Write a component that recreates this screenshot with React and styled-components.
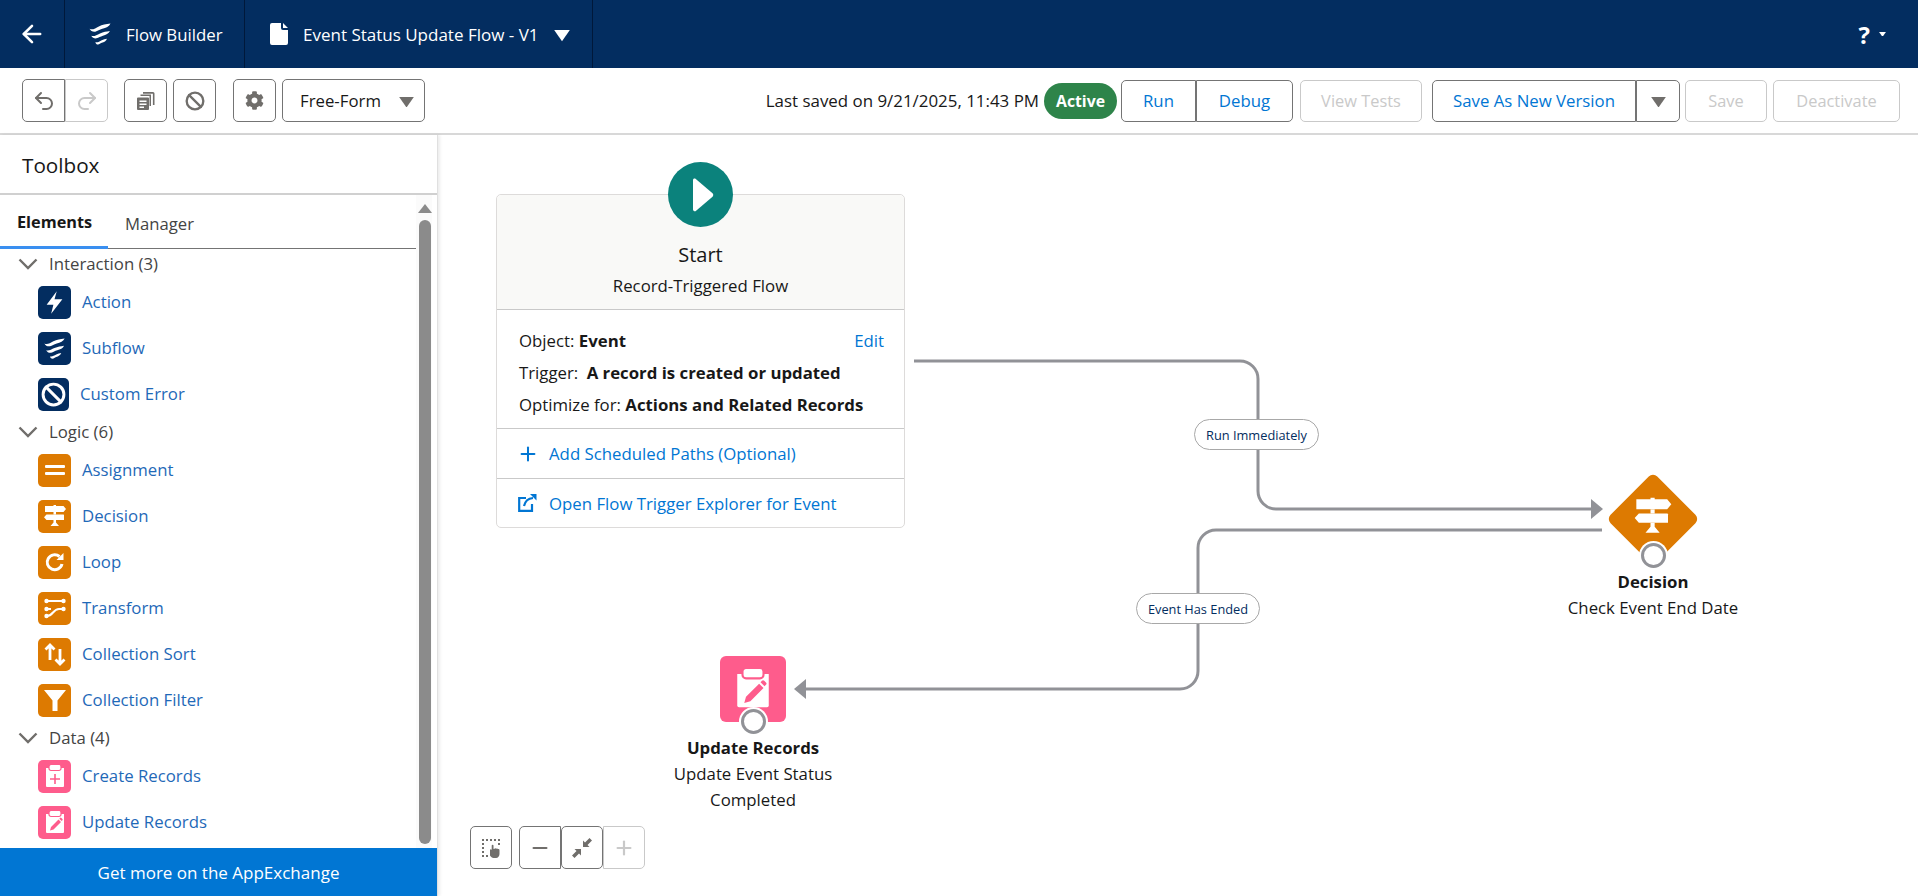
import React from "react";
import styled, { createGlobalStyle } from "styled-components";
import { ArrowLeft, Undo2, Redo2, Ban, Plus, Minus } from "lucide-react";
import { FaCog } from "react-icons/fa";

const GlobalStyle = createGlobalStyle`
  html, body { margin: 0; padding: 0; background: #fff; }
  body { font-family: "Open Sans", "Noto Sans", sans-serif; font-size: 16.8px; color: #181818; overflow: hidden; }
  * { box-sizing: border-box; }
`;

const NAVY = "#032d60";
const ORANGE = "#dd7a01";
const PINK = "#fe5c8c";
const LINK = "#0176d3";
const TOOL_LINK = "#1f69b8";
const LINE = "#919297";

function FlowWaves({ size = 24, color = "#fff" }) {
  return (
    <svg width={size} height={size} viewBox="0 0 24 24" fill={color}>
      <path d="M3 7.500c2.500 1.500 5-.5 8-2 3-1.400 6-2 10-2.500-1 2.500-4 3.800-7 4.500-2.500.6-4 2-6 2.500-2 .4-4-.5-5-2.500z" />
      <path d="M4.500 13.500c2.500 1 4.500-.8 7.500-2 3-1.200 5.500-1.500 8.500-2-1 2.300-3.500 3.300-6 4-2.200.6-3.500 1.800-5.500 2.200-1.800.3-3.500-.5-4.500-2.200z" />
      <path d="M8 19c2 .6 3.500-.8 5.500-1.700 1.500-.7 3-1 4.500-1.300-.7 2-2.500 3-4.500 3.500-1.300.4-2 1.500-3.200 1.500-1 0-2-.8-2.300-2z" />
    </svg>
  );
}

function Bolt() {
  return <svg width="27" height="27" viewBox="0 0 24 24" fill="#fff"><path d="M14 2 5 14h6l-2 8 10-13h-7z" /></svg>;
}
function Bars() {
  return <svg width="24" height="24" viewBox="0 0 24 24" fill="#fff"><rect x="2" y="7" width="20" height="3" rx="1" /><rect x="2" y="14" width="20" height="3" rx="1" /></svg>;
}
function SignPost({ size = 24 }) {
  return (
    <svg width={size} height={size} viewBox="0 0 24 24" fill="#fff">
      <path d="M2 2h8.500V1H13v1h7.500L23 5l-2.500 3H2z" />
      <path d="M3.500 10.500H20.500a.5.500 0 0 1 .5.500v5H3.500L1 13.200z" />
      <path d="M10.500 16H13v2.500l3 3.500H7.500l3-3.500z" />
      <path d="M10.500 8H13v2.500h-2.500z" />
    </svg>
  );
}
function LoopArrow() {
  return (
    <svg width="24" height="24" viewBox="0 0 24 24" fill="none" stroke="#fff" strokeWidth="3">
      <path d="M19 14a7.500 7.500 0 1 1-2.500-7.500" />
      <path d="M20.500 3v7h-7z" fill="#fff" stroke="none" />
    </svg>
  );
}
function TransformGlyph() {
  return (
    <svg width="24" height="24" viewBox="0 0 24 24" fill="none" stroke="#fff" strokeWidth="2">
      <path d="M4 5h16M4 13h4M4 20c6 0 6-7 12-7h4" />
      <g fill="#fff" stroke="none"><circle cx="3.500" cy="5" r="2.200" /><circle cx="20.500" cy="5" r="2.200" /><circle cx="3.500" cy="13" r="2.200" /><circle cx="20.500" cy="13" r="2.200" /><circle cx="3.500" cy="20" r="2.200" /></g>
    </svg>
  );
}
function SortArrows() {
  return (
    <svg width="24" height="24" viewBox="0 0 24 24" fill="none" stroke="#fff" strokeWidth="2.800">
      <path d="M7 18V3M2.500 7.500 7 3l4.500 4.500" />
      <path d="M17 7v15M12.500 17.500 17 22l4.500-4.500" />
    </svg>
  );
}
function Funnel() {
  return <svg width="24" height="24" viewBox="0 0 24 24" fill="#fff"><path d="M1 2h22l-8.500 10.500V23h-5V12.500z" /></svg>;
}
function Clipboard({ size = 24, color = PINK, mark = "edit" }) {
  return (
    <svg width={size} height={size} viewBox="0 0 24 24">
      <path d="M3 4h18v18a1 1 0 0 1-1 1H4a1 1 0 0 1-1-1z" fill="#fff" />
      <rect x="6" y="0.500" width="12" height="6" rx="2" fill="#fff" stroke={color} strokeWidth="1.200" />
      {mark === "plus" ? (
        <path d="M12 10v10M7 15h10" stroke={color} strokeWidth="1.600" />
      ) : (
        <path d="M7 20.500l1-3.500 7.500-7.500 2.500 2.500L10.500 19.500zM16.300 8.700l.8-.8a.9.900 0 0 1 1.300 0l1 1a.9.900 0 0 1 0 1.300l-.8.800z" fill={color} />
      )}
    </svg>
  );
}
function Chevron() {
  return <svg width="20" height="12" viewBox="0 0 20 12" fill="none" stroke="#706e6b" strokeWidth="2.400"><path d="M1.500 1.500 10 10l8.500-8.500" /></svg>;
}
function OpenOut() {
  return (
    <svg width="20" height="20" viewBox="0 0 20 20" fill="none" stroke={LINK} strokeWidth="2.200">
      <path d="M9 5H2.200v12.800H15V11" />
      <path d="M7 13c1-4.500 4-7.500 9-8" />
      <path d="M13 1h6.500v6.500z" fill={LINK} stroke="none" />
    </svg>
  );
}
function CopyDocs() {
  return (
    <svg width="20" height="20" viewBox="0 0 20 20" fill="#706e6b">
      <path d="M7 1h10a1.500 1.500 0 0 1 1.500 1.500V14h-1.600V2.700H7z" />
      <path d="M4.500 3.500H15V15h-1.500V5H4.500z" />
      <path d="M2 6.500h10a1 1 0 0 1 1 1V18a1 1 0 0 1-1 1H2a1 1 0 0 1-1-1V7.500a1 1 0 0 1 1-1z" />
      <path d="M3.500 9.500h7v1.500h-7zM3.500 12.500h7V14h-7zM3.500 15.500h4.500V17H3.500z" fill="#fff" />
    </svg>
  );
}
function Marquee() {
  return (
    <svg width="24" height="24" viewBox="0 0 24 24" fill="#706e6b">
      <path d="M3 3h2v2H3zM7 3h2v2H7zM11 3h2v2h-2zM15 3h2v2h-2zM19 3h2v2h-2zM3 7h2v2H3zM19 7h2v2h-2zM3 11h2v2H3zM3 15h2v2H3zM3 19h2v2H3zM7 19h2v2H7z" />
      <path d="M11 14c0-1 1.500-1 1.700 0V9.500c0-1 1.800-1 1.800 0V13l1-.2c.6-1 1.600-.6 1.800 0 .7-.6 1.600-.2 1.700.4.700-.3 1.500.2 1.500 1V18c0 2-1.500 4-3.500 4h-2.500c-1.500 0-2.500-1-3.500-2.500z" />
    </svg>
  );
}
function ShrinkArrows() {
  return (
    <svg width="22" height="22" viewBox="0 0 22 22" fill="#706e6b">
      <path d="M12 10V3.500l2 2L18.500 1 21 3.500 16.500 8l2 2z" />
      <path d="M10 12v6.500l-2-2L3.500 21 1 18.500 5.500 14l-2-2z" />
    </svg>
  );
}
function Caret({ size = 14, color = "#706e6b", drop = 0 }) {
  return <CaretSvg $drop={drop} width={size} height={size * 0.7} viewBox="0 0 14 10" fill={color}><path d="M0 0h14L7 10z" /></CaretSvg>;
}

const groups = [
  { name: "Interaction (3)", items: [
    { label: "Action", color: NAVY, icon: <Bolt /> },
    { label: "Subflow", color: NAVY, icon: <FlowWaves size={27} /> },
    { label: "Custom Error", color: NAVY, icon: <Ban size={25} color="#fff" strokeWidth={2.8} />, narrow: true },
  ] },
  { name: "Logic (6)", items: [
    { label: "Assignment", color: ORANGE, icon: <Bars /> },
    { label: "Decision", color: ORANGE, icon: <SignPost /> },
    { label: "Loop", color: ORANGE, icon: <LoopArrow /> },
    { label: "Transform", color: ORANGE, icon: <TransformGlyph /> },
    { label: "Collection Sort", color: ORANGE, icon: <SortArrows /> },
    { label: "Collection Filter", color: ORANGE, icon: <Funnel /> },
  ] },
  { name: "Data (4)", items: [
    { label: "Create Records", color: PINK, icon: <Clipboard size={24} mark="plus" /> },
    { label: "Update Records", color: PINK, icon: <Clipboard size={24} /> },
  ] },
];

export default function App() {
  return (
    <Page>
      <GlobalStyle />
      <TopBar>
        <BackCell><ArrowLeft size={28} color="#fff" strokeWidth={2.2} /></BackCell>
        <BuilderCell><FlowWaves size={28} /><span>Flow Builder</span></BuilderCell>
        <FlowCell>
          <svg width="18" height="22" viewBox="0 0 18 22" fill="#fff"><path d="M2 0h9v5a2 2 0 0 0 2 2h5v13a2 2 0 0 1-2 2H2a2 2 0 0 1-2-2V2a2 2 0 0 1 2-2zM13 0l5 5h-5z" /></svg>
          <span>Event Status Update Flow - V1</span>
          <Caret size={16} color="#fff" drop={4} />
        </FlowCell>
        <HelpCell><HelpMark>?</HelpMark><Caret size={7} color="#fff" /></HelpCell>
      </TopBar>

      <ToolBar>
        <ToolGroup>
          <Joined>
            <IconBtn><Undo2 size={24} color="#706e6b" /></IconBtn>
            <IconBtn $off><Redo2 size={24} color="#c9c9c9" /></IconBtn>
          </Joined>
          <IconBtn $gap={16}><CopyDocs /></IconBtn>
          <IconBtn $gap={6}><Ban size={20} color="#706e6b" strokeWidth={2.8} /></IconBtn>
          <IconBtn $gap={17}><FaCog size={19} color="#706e6b" /></IconBtn>
          <ModeSelect><span>Free-Form</span><Caret size={15} drop={3} /></ModeSelect>
        </ToolGroup>
        <ToolGroup>
          <SavedText>Last saved on 9/21/2025, 11:43 PM</SavedText>
          <ActiveBadge>Active</ActiveBadge>
          <Joined>
            <TextBtn $w={75}>Run</TextBtn>
            <TextBtn $w={97}>Debug</TextBtn>
          </Joined>
          <TextBtn $w={122} $off $gap={7}>View Tests</TextBtn>
          <Joined $gap={10}>
            <TextBtn $w={204}>Save As New Version</TextBtn>
            <TextBtn $w={44}><Caret size={15} drop={3} /></TextBtn>
          </Joined>
          <TextBtn $w={82} $off $gap={5}>Save</TextBtn>
          <TextBtn $w={127} $off $gap={6}>Deactivate</TextBtn>
        </ToolGroup>
      </ToolBar>

      <Main>
        <Sidebar>
          <SideTitle>Toolbox</SideTitle>
          <SideBody>
            <SideList>
              <Tabs>
                <Tab $active>Elements</Tab>
                <Tab>Manager</Tab>
              </Tabs>
              {groups.map((g) => (
                <div key={g.name}>
                  <GroupHead><Chevron /><RowLabel>{g.name}</RowLabel></GroupHead>
                  {g.items.map((it) => (
                    <ToolItem key={it.label}>
                      <ToolIcon $color={it.color} $narrow={it.narrow}>{it.icon}</ToolIcon>
                      <RowLabel>{it.label}</RowLabel>
                    </ToolItem>
                  ))}
                </div>
              ))}
            </SideList>
            <ScrollTrack>
              <ScrollArrow />
              <ScrollThumb />
            </ScrollTrack>
          </SideBody>
          <Exchange>Get more on the AppExchange</Exchange>
        </Sidebar>

        <Canvas>
          <Wires width="1481" height="761" viewBox="438 135 1481 761" fill="none">
            <path d="M914 361H1240a18 18 0 0 1 18 18V491a18 18 0 0 0 18 18H1592" stroke={LINE} strokeWidth="3" />
            <path d="M1591 499l12 10-12 10z" fill={LINE} />
            <path d="M1602 530H1216a18 18 0 0 0-18 18V671a18 18 0 0 1-18 18H806" stroke={LINE} strokeWidth="3" />
            <path d="M806 679l-12 10 12 10z" fill={LINE} />
          </Wires>

          <StartCard>
            <StartCircle>
              <svg width="22" height="34" viewBox="0 0 22 34" fill="#fff"><path d="M1 2c0-1.500 1.500-2 2.500-1.200l17 14.500c1 .9 1 2.500 0 3.400l-17 14.500C2.500 33.500 1 33 1 31.500z" /></svg>
            </StartCircle>
            <StartHead>
              <StartTitle>Start</StartTitle>
              <div>Record-Triggered Flow</div>
            </StartHead>
            <StartInfo>
              <InfoRow><span>Object: <b>Event</b></span><EditLink>Edit</EditLink></InfoRow>
              <InfoRow><span>Trigger: <TriggerValue>A record is created or updated</TriggerValue></span></InfoRow>
              <InfoRow><span>Optimize for: <b>Actions and Related Records</b></span></InfoRow>
            </StartInfo>
            <CardLink>
              <Plus size={22} color={LINK} strokeWidth={2.2} />
              <span>Add Scheduled Paths (Optional)</span>
            </CardLink>
            <CardLink>
              <OpenOut />
              <LinkText>Open Flow Trigger Explorer for Event</LinkText>
            </CardLink>
          </StartCard>

          <EdgeLabel $x={756} $y={284} $w={125}>Run Immediately</EdgeLabel>
          <EdgeLabel $x={698} $y={458} $w={124}>Event Has Ended</EdgeLabel>

          <FlowNode $cx={1215} $top={340}>
            <Diamond><DiamondGlyph><SignPost size={40} /></DiamondGlyph></Diamond>
            <NodeDot $overlap={20} />
            <NodeTitle>Decision</NodeTitle>
            <div>Check Event End Date</div>
          </FlowNode>

          <FlowNode $cx={315} $top={521}>
            <PinkTile><Clipboard size={42} /></PinkTile>
            <NodeDot $overlap={13} />
            <NodeTitle>Update Records</NodeTitle>
            <div>Update Event Status</div>
            <div>Completed</div>
          </FlowNode>

          <ZoomBar>
            <ZoomBtn><Marquee /></ZoomBtn>
            <ZoomGroup>
              <ZoomBtn><Minus size={22} color="#706e6b" strokeWidth={2.4} /></ZoomBtn>
              <ZoomBtn><ShrinkArrows /></ZoomBtn>
              <ZoomBtn $off><Plus size={22} color="#c9c9c9" strokeWidth={2.4} /></ZoomBtn>
            </ZoomGroup>
          </ZoomBar>
        </Canvas>
      </Main>
    </Page>
  );
}

const CaretSvg = styled.svg`
  margin-top: ${(p) => p.$drop}px;
`;

const Page = styled.div`
  width: 1918px;
  height: 896px;
  display: flex;
  flex-direction: column;
  overflow: hidden;
`;

const TopBar = styled.header`
  height: 68px;
  flex: none;
  background: ${NAVY};
  color: #fff;
  display: flex;
  align-items: stretch;
`;
const BackCell = styled.div`
  width: 65px;
  display: flex;
  align-items: center;
  justify-content: center;
  border-right: 1px solid #00183a;
`;
const BuilderCell = styled.div`
  width: 180px;
  display: flex;
  align-items: center;
  gap: 12px;
  padding-left: 21px;
  border-right: 1px solid #00183a;
`;
const FlowCell = styled.div`
  width: 348px;
  display: flex;
  align-items: center;
  gap: 15px;
  padding-left: 25px;
  border-right: 1px solid #00183a;
  font-size: 17px;
`;
const HelpCell = styled.div`
  margin-left: auto;
  padding-right: 32px;
  display: flex;
  align-items: center;
  gap: 9px;
`;
const HelpMark = styled.span`
  font-size: 24px;
  font-weight: 700;
`;

const ToolBar = styled.div`
  height: 67px;
  flex: none;
  display: flex;
  align-items: center;
  justify-content: space-between;
  padding: 0 18px 0 22px;
  border-bottom: 2px solid #d8d8d8;
`;
const ToolGroup = styled.div`
  display: flex;
  align-items: center;
`;
const Joined = styled.div`
  display: flex;
  margin-left: ${(p) => p.$gap || 0}px;
  & > * { border-radius: 0; margin: 0; }
  & > * + * { border-left: none; }
  & > *:first-child { border-radius: 5px 0 0 5px; }
  & > *:last-child { border-radius: 0 5px 5px 0; }
`;
const IconBtn = styled.button`
  width: 43px;
  height: 43px;
  padding: 0;
  margin-left: ${(p) => p.$gap || 0}px;
  display: flex;
  align-items: center;
  justify-content: center;
  background: #fff;
  border: 1px solid ${(p) => (p.$off ? "#c9c9c9" : "#747474")};
  border-radius: 5px;
`;
const ModeSelect = styled.button`
  width: 143px;
  height: 43px;
  margin-left: 6px;
  padding: 0 10px 0 17px;
  display: flex;
  align-items: center;
  justify-content: space-between;
  background: #fff;
  border: 1px solid #747474;
  border-radius: 5px;
  font: inherit;
  color: #181818;
`;
const SavedText = styled.span`
  font-size: 16.900px;
  margin-right: 5px;
`;
const ActiveBadge = styled.span`
  width: 73px;
  height: 36px;
  border-radius: 18px;
  background: #2e844a;
  color: #fff;
  font-weight: 700;
  font-size: 15.800px;
  display: flex;
  align-items: center;
  justify-content: center;
  margin-right: 4px;
`;
const TextBtn = styled.button`
  width: ${(p) => p.$w}px;
  height: 42px;
  margin-left: ${(p) => p.$gap || 0}px;
  padding: 0;
  display: flex;
  align-items: center;
  justify-content: center;
  background: #fff;
  border: 1px solid ${(p) => (p.$off ? "#c9c9c9" : "#747474")};
  border-radius: 5px;
  font: inherit;
  font-size: ${(p) => (p.$off ? 16.4 : 16.8)}px;
  color: ${(p) => (p.$off ? "#c9c9c9" : LINK)};
`;

const Main = styled.div`
  flex: 1;
  display: flex;
  min-height: 0;
`;
const Sidebar = styled.aside`
  width: 438px;
  flex: none;
  display: flex;
  flex-direction: column;
  border-right: 1px solid #e0e0e0;
  box-shadow: 2px 0 3px rgba(0, 0, 0, 0.08);
  position: relative;
  z-index: 1;
  background: #fff;
`;
const SideTitle = styled.div`
  height: 60px;
  flex: none;
  padding: 2px 22px 0;
  display: flex;
  align-items: center;
  font-size: 20.700px;
  border-bottom: 2px solid #d0d0d0;
`;
const SideBody = styled.div`
  flex: 1;
  display: flex;
  min-height: 0;
`;
const SideList = styled.div`
  width: 416px;
  flex: none;
  overflow: hidden;
`;
const Tabs = styled.div`
  height: 54px;
  display: flex;
  border-bottom: 1px solid #747474;
`;
const Tab = styled.div`
  width: ${(p) => (p.$active ? 108 : 120)}px;
  padding: 2px 0 0 17px;
  display: flex;
  align-items: center;
  font-weight: ${(p) => (p.$active ? 700 : 400)};
  font-size: ${(p) => (p.$active ? 16.3 : 16.7)}px;
  color: ${(p) => (p.$active ? "#181818" : "#444")};
  border-bottom: ${(p) => (p.$active ? "3px solid #3a8ff0" : "none")};
  margin-bottom: -1px;
`;
const RowLabel = styled.span`
  margin-bottom: 2px;
`;
const GroupHead = styled.div`
  height: 30px;
  display: flex;
  align-items: center;
  gap: 11px;
  padding-left: 18px;
  color: #444;
`;
const ToolItem = styled.div`
  height: 46px;
  display: flex;
  align-items: center;
  gap: 11px;
  padding-left: 38px;
  color: ${TOOL_LINK};
`;
const ToolIcon = styled.div`
  width: ${(p) => (p.$narrow ? 31 : 33)}px;
  height: 33px;
  border-radius: 5px;
  background: ${(p) => p.$color};
  display: flex;
  align-items: center;
  justify-content: center;
`;
const ScrollTrack = styled.div`
  width: 16px;
  flex: none;
  padding: 9px 1px 4px 3px;
  display: flex;
  flex-direction: column;
  align-items: center;
  gap: 7px;
  background: #fbfbfb;
`;
const ScrollArrow = styled.div`
  width: 0;
  height: 0;
  flex: none;
  border-left: 7px solid transparent;
  border-right: 7px solid transparent;
  border-bottom: 9px solid #8b8b8b;
`;
const ScrollThumb = styled.div`
  width: 12px;
  flex: 1;
  border-radius: 6px;
  background: #8b8b8b;
`;
const Exchange = styled.div`
  height: 48px;
  flex: none;
  background: #0176d3;
  color: #fff;
  font-size: 17px;
  display: flex;
  align-items: center;
  justify-content: center;
`;

const Canvas = styled.main`
  flex: 1;
  position: relative;
  background: #fff;
  overflow: hidden;
`;
const Wires = styled.svg`
  position: absolute;
  left: 0;
  top: 0;
`;
const StartCard = styled.section`
  position: absolute;
  left: 58px;
  top: 59px;
  width: 409px;
  border: 1px solid #dddbda;
  border-radius: 5px;
  background: #fff;
`;
const StartCircle = styled.div`
  position: absolute;
  left: 171px;
  top: -33px;
  width: 65px;
  height: 65px;
  border-radius: 50%;
  background: #0b827c;
  display: flex;
  align-items: center;
  justify-content: center;
  padding-left: 4px;
`;
const StartHead = styled.div`
  height: 115px;
  padding-top: 47px;
  background: #f9f9f7;
  border-bottom: 1px solid #c9c9c9;
  border-radius: 5px 5px 0 0;
  text-align: center;
`;
const StartTitle = styled.div`
  font-size: 20px;
  line-height: 26px;
  margin-bottom: 6px;
`;
const StartInfo = styled.div`
  height: 119px;
  padding: 14px 20px 0 22px;
  border-bottom: 1px solid #c9c9c9;
`;
const InfoRow = styled.div`
  height: 32px;
  display: flex;
  align-items: center;
  justify-content: space-between;
  b { font-weight: 700; }
`;
const TriggerValue = styled.b`
  margin-left: 4px;
`;
const EditLink = styled.span`
  color: ${LINK};
`;
const CardLink = styled.div`
  height: 49px;
  padding-left: 20px;
  display: flex;
  align-items: center;
  gap: 10px;
  color: ${LINK};
  & + & { border-top: 1px solid #c9c9c9; }
`;
const LinkText = styled.span`
  margin-left: 2px;
`;
const EdgeLabel = styled.div`
  position: absolute;
  left: ${(p) => p.$x}px;
  top: ${(p) => p.$y}px;
  width: ${(p) => p.$w}px;
  height: 31px;
  border: 1px solid #a8a8a8;
  border-radius: 16px;
  background: #fff;
  color: ${NAVY};
  font-size: 12.800px;
  display: flex;
  align-items: center;
  justify-content: center;
`;
const FlowNode = styled.div`
  position: absolute;
  left: ${(p) => p.$cx - 110}px;
  top: ${(p) => p.$top}px;
  width: 220px;
  display: flex;
  flex-direction: column;
  align-items: center;
  text-align: center;
  line-height: 26px;
`;
const Diamond = styled.div`
  width: 88px;
  height: 88px;
  position: relative;
  &::before {
    content: "";
    position: absolute;
    left: 11px;
    top: 11px;
    width: 66px;
    height: 66px;
    background: ${ORANGE};
    border-radius: 6px;
    transform: rotate(45deg);
  }
`;
const DiamondGlyph = styled.div`
  position: absolute;
  left: 24px;
  top: 21px;
`;
const PinkTile = styled.div`
  width: 66px;
  height: 66px;
  border-radius: 6px;
  background: ${PINK};
  display: flex;
  align-items: center;
  justify-content: center;
  padding-bottom: 2px;
`;
const NodeDot = styled.div`
  width: 25px;
  height: 25px;
  margin-top: -${(p) => p.$overlap}px;
  border-radius: 50%;
  background: #fff;
  border: 3px solid ${LINE};
  box-shadow: 0 0 0 2px #fff;
  position: relative;
`;
const NodeTitle = styled.div`
  font-weight: 700;
  margin-top: 1px;
`;
const ZoomBar = styled.div`
  position: absolute;
  left: 32px;
  top: 691px;
  display: flex;
  gap: 7px;
`;
const ZoomGroup = styled.div`
  display: flex;
  & > * { border-radius: 0; }
  & > * + * { border-left: none; }
  & > *:first-child { border-radius: 5px 0 0 5px; }
  & > *:last-child { border-radius: 0 5px 5px 0; }
`;
const ZoomBtn = styled.button`
  width: 42px;
  height: 43px;
  padding: 0;
  display: flex;
  align-items: center;
  justify-content: center;
  background: #fff;
  border: 1px solid ${(p) => (p.$off ? "#c9c9c9" : "#747474")};
  border-radius: 5px;
`;
